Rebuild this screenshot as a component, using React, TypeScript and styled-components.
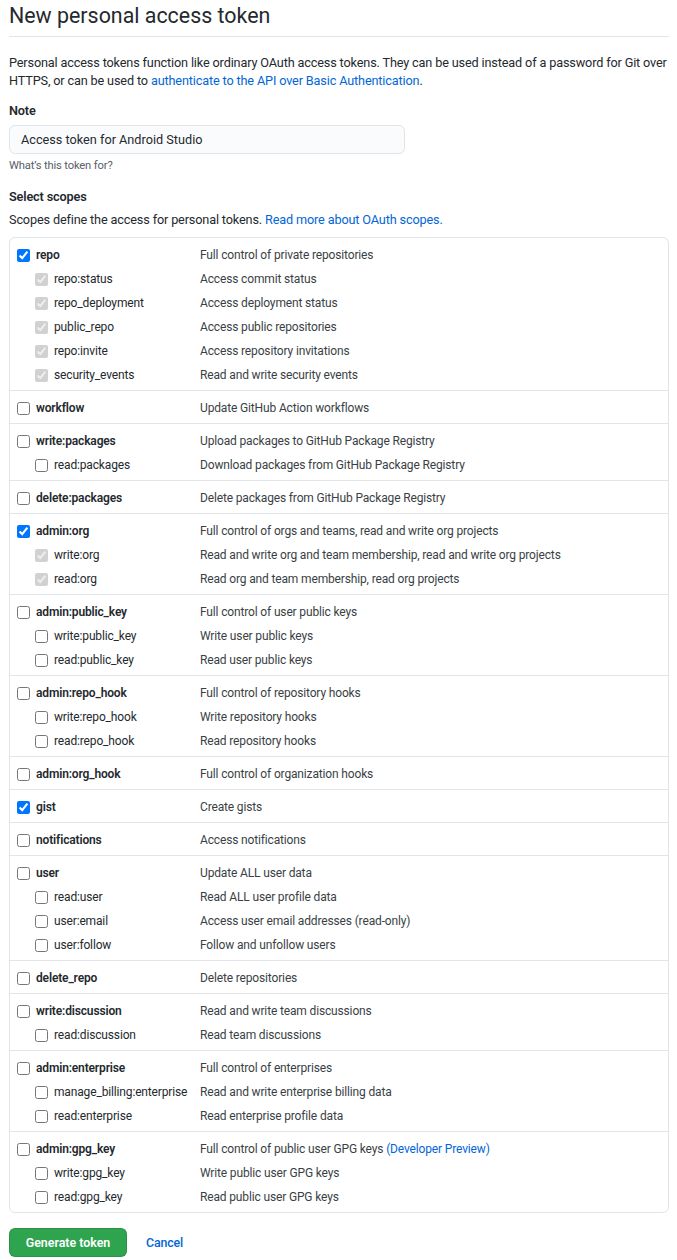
import React from "react";
import styled, { createGlobalStyle } from "styled-components";

interface Scope {
  name: string;
  desc: string;
  checked?: boolean;
  link?: string;
  children?: { name: string; desc: string }[];
}

const scopes: Scope[] = [
  {
    name: "repo",
    desc: "Full control of private repositories",
    checked: true,
    children: [
      { name: "repo:status", desc: "Access commit status" },
      { name: "repo_deployment", desc: "Access deployment status" },
      { name: "public_repo", desc: "Access public repositories" },
      { name: "repo:invite", desc: "Access repository invitations" },
      { name: "security_events", desc: "Read and write security events" },
    ],
  },
  { name: "workflow", desc: "Update GitHub Action workflows" },
  {
    name: "write:packages",
    desc: "Upload packages to GitHub Package Registry",
    children: [{ name: "read:packages", desc: "Download packages from GitHub Package Registry" }],
  },
  { name: "delete:packages", desc: "Delete packages from GitHub Package Registry" },
  {
    name: "admin:org",
    desc: "Full control of orgs and teams, read and write org projects",
    checked: true,
    children: [
      { name: "write:org", desc: "Read and write org and team membership, read and write org projects" },
      { name: "read:org", desc: "Read org and team membership, read org projects" },
    ],
  },
  {
    name: "admin:public_key",
    desc: "Full control of user public keys",
    children: [
      { name: "write:public_key", desc: "Write user public keys" },
      { name: "read:public_key", desc: "Read user public keys" },
    ],
  },
  {
    name: "admin:repo_hook",
    desc: "Full control of repository hooks",
    children: [
      { name: "write:repo_hook", desc: "Write repository hooks" },
      { name: "read:repo_hook", desc: "Read repository hooks" },
    ],
  },
  { name: "admin:org_hook", desc: "Full control of organization hooks" },
  { name: "gist", desc: "Create gists", checked: true },
  { name: "notifications", desc: "Access notifications" },
  {
    name: "user",
    desc: "Update ALL user data",
    children: [
      { name: "read:user", desc: "Read ALL user profile data" },
      { name: "user:email", desc: "Access user email addresses (read-only)" },
      { name: "user:follow", desc: "Follow and unfollow users" },
    ],
  },
  { name: "delete_repo", desc: "Delete repositories" },
  {
    name: "write:discussion",
    desc: "Read and write team discussions",
    children: [{ name: "read:discussion", desc: "Read team discussions" }],
  },
  {
    name: "admin:enterprise",
    desc: "Full control of enterprises",
    children: [
      { name: "manage_billing:enterprise", desc: "Read and write enterprise billing data" },
      { name: "read:enterprise", desc: "Read enterprise profile data" },
    ],
  },
  {
    name: "admin:gpg_key",
    desc: "Full control of public user GPG keys",
    link: "(Developer Preview)",
    children: [
      { name: "write:gpg_key", desc: "Write public user GPG keys" },
      { name: "read:gpg_key", desc: "Read public user GPG keys" },
    ],
  },
];

const GlobalStyle = createGlobalStyle`
  body {
    margin: 0;
    background: #fff;
    color: #24292e;
    font-family: Roboto, "Liberation Sans", sans-serif;
    font-size: 12.7px;
    letter-spacing: -0.15px;
  }
`;

const Page = styled.div`
  width: 660px;
  padding: 0 0 0 9px;
`;

const Header = styled.div`
  border-bottom: 1px solid #e1e4e8;
  height: 36px;
  display: flex;
  align-items: center;
`;

const Title = styled.h1`
  margin: -6px 0 0;
  font-size: 21.4px;
  font-weight: 400;
  letter-spacing: 0;
`;

const Intro = styled.p`
  margin: 17px 0 0;
  line-height: 18px;
`;

const Link = styled.a`
  color: #0366d6;
  text-decoration: none;
`;

const Label = styled.div<{ $top: number }>`
  font-weight: 600;
  margin-top: ${(p) => p.$top}px;
  line-height: 18px;
`;

const NoteInput = styled.input`
  display: block;
  box-sizing: border-box;
  margin-top: 5px;
  width: 396px;
  height: 29px;
  padding: 0 11px;
  font: inherit;
  color: #24292e;
  background: #fafbfc;
  border: 1px solid #e1e4e8;
  border-radius: 6px;
  outline: none;
`;

const Hint = styled.div`
  font-size: 11.2px;
  color: #586069;
  margin-top: 5px;
`;

const Sub = styled.p`
  margin: 5px 0 0;
  line-height: 18px;
`;

const ScopeBox = styled.div`
  margin-top: 8px;
  border: 1px solid #e1e4e8;
  border-radius: 6px;
  font-size: 12px;
`;

const Section = styled.div`
  padding: 5px 0 3px;
  & + & {
    border-top: 1px solid #e1e4e8;
  }
`;

const Row = styled.label<{ $child?: boolean }>`
  display: grid;
  grid-template-columns: ${(p) => (p.$child ? "18px 19px 146px 1fr" : "19px 164px 1fr")};
  align-items: center;
  height: 24px;
  padding-left: 7px;
`;

const Box = styled.input`
  margin: 0;
  width: 13px;
  height: 13px;
`;

const Name = styled.span<{ $bold?: boolean }>`
  font-weight: ${(p) => (p.$bold ? 600 : 400)};
  white-space: nowrap;
`;

const Desc = styled.span`
  color: #3a3f45;
  white-space: nowrap;
`;

const Actions = styled.div`
  display: flex;
  align-items: center;
  gap: 19px;
  margin-top: 15px;
`;

const GreenButton = styled.button`
  height: 29px;
  width: 118px;
  padding: 0;
  font: inherit;
  font-size: 12.4px;
  font-weight: 600;
  color: #fff;
  background: #2ea44f;
  border: 1px solid rgba(27, 31, 35, 0.15);
  border-radius: 6px;
`;

const CancelLink = styled(Link)`
  font-size: 12.4px;
  font-weight: 500;
`;

const Spacer = styled.span``;

export default function App() {
  return (
    <>
      <GlobalStyle />
      <Page>
        <Header>
          <Title>New personal access token</Title>
        </Header>
        <Intro>
          Personal access tokens function like ordinary OAuth access tokens. They can be used instead of a password
          for Git over HTTPS, or can be used to{" "}
          <Link href="#">authenticate to the API over Basic Authentication</Link>.
        </Intro>
        <Label $top={12}>Note</Label>
        <NoteInput defaultValue="Access token for Android Studio" />
        <Hint>What’s this token for?</Hint>
        <Label $top={16}>Select scopes</Label>
        <Sub>
          Scopes define the access for personal tokens. <Link href="#">Read more about OAuth scopes.</Link>
        </Sub>
        <ScopeBox>
          {scopes.map((s) => (
            <Section key={s.name}>
              <Row>
                <Box type="checkbox" defaultChecked={s.checked} />
                <Name $bold>{s.name}</Name>
                <Desc>
                  {s.desc}
                  {s.link && (
                    <>
                      {" "}
                      <Link href="#">{s.link}</Link>
                    </>
                  )}
                </Desc>
              </Row>
              {s.children?.map((c) => (
                <Row $child key={c.name}>
                  <Spacer />
                  <Box type="checkbox" defaultChecked={s.checked} disabled={s.checked} />
                  <Name>{c.name}</Name>
                  <Desc>{c.desc}</Desc>
                </Row>
              ))}
            </Section>
          ))}
        </ScopeBox>
        <Actions>
          <GreenButton>Generate token</GreenButton>
          <CancelLink href="#">Cancel</CancelLink>
        </Actions>
      </Page>
    </>
  );
}
